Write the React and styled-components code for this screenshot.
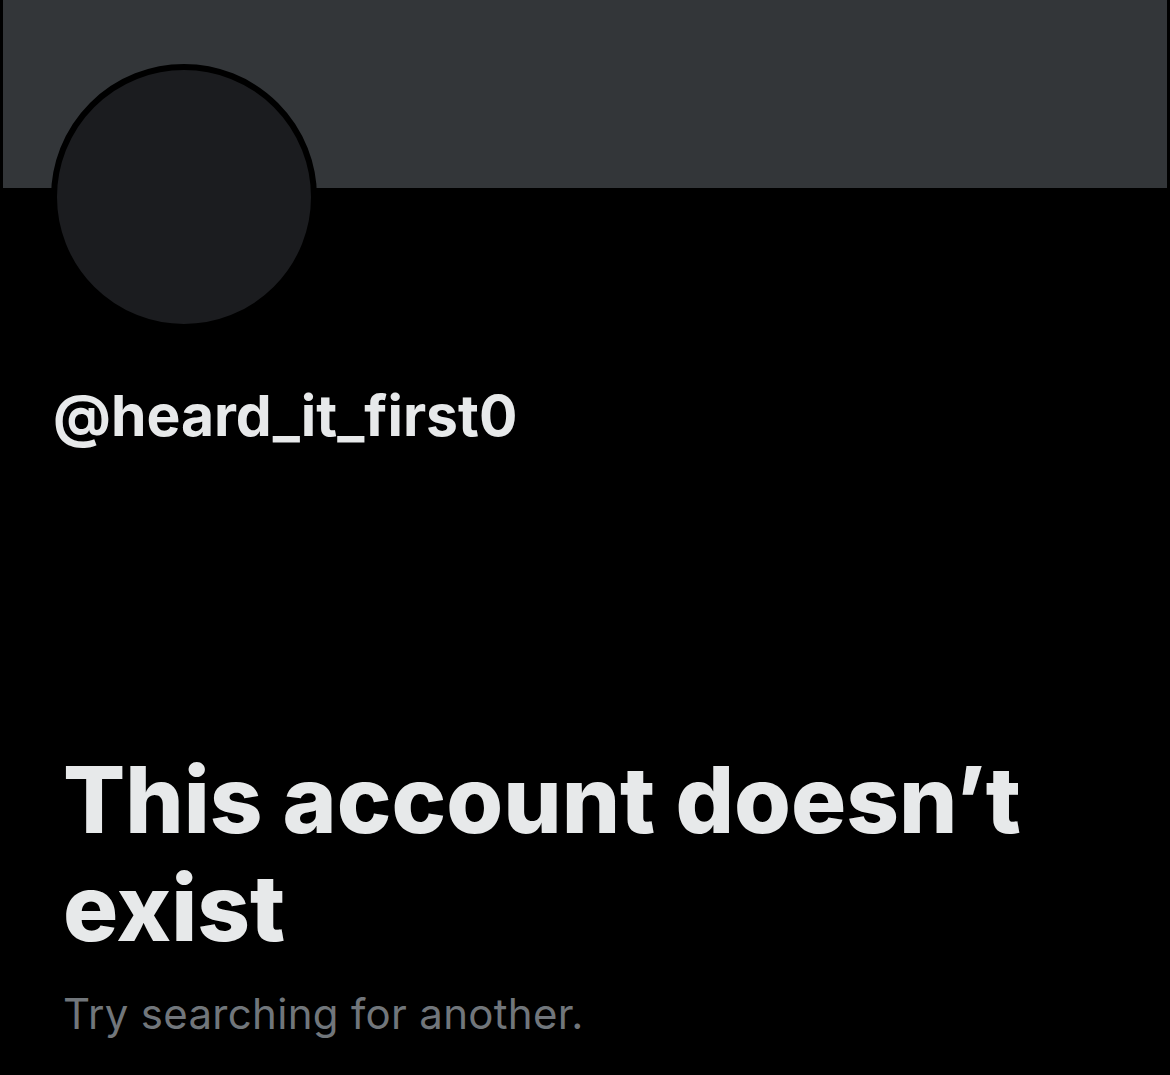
import React from 'react';
import styled, { createGlobalStyle } from 'styled-components';

const GlobalStyle = createGlobalStyle`
  html, body {
    margin: 0;
    padding: 0;
    background: #000;
  }
  body {
    font-family: Inter, "Noto Sans", "Liberation Sans", sans-serif;
    -webkit-font-smoothing: antialiased;
  }
`;

const Page = styled.div`
  width: 1170px;
  height: 1075px;
  overflow: hidden;
  background: #000;
`;

const Banner = styled.div`
  height: 188px;
  margin: 0 3px;
  background: #333639;
`;

const Avatar = styled.div`
  width: 254px;
  height: 254px;
  margin: -124px 0 0 51px;
  border: 6px solid #000;
  border-radius: 50%;
  background: #1b1c1f;
`;

const Handle = styled.div`
  margin: 52px 0 0 53px;
  font-size: 57px;
  font-weight: 700;
  line-height: 68px;
  letter-spacing: 0;
  color: #e7e9ea;
`;

const Message = styled.div`
  margin: 296px 0 0 63px;
  width: 1060px;
`;

const Title = styled.h1`
  margin: 0;
  font-size: 92px;
  font-weight: 800;
  line-height: 108px;
  letter-spacing: 0;
  color: #e7e9ea;
`;

const Subtitle = styled.p`
  margin: 26px 0 0;
  font-size: 42px;
  font-weight: 400;
  line-height: 52px;
  letter-spacing: 0.3px;
  color: #71767b;
`;

export default function App() {
  return (
    <Page>
      <GlobalStyle />
      <Banner />
      <Avatar />
      <Handle>@heard_it_first0</Handle>
      <Message>
        <Title>This account doesn’t exist</Title>
        <Subtitle>Try searching for another.</Subtitle>
      </Message>
    </Page>
  );
}
